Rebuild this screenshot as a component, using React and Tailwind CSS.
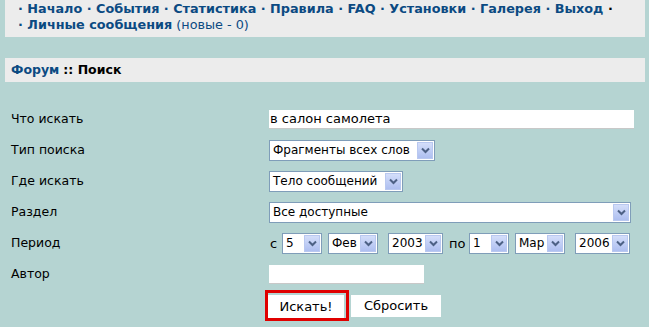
import React from "react";

const font = { fontFamily: "'DejaVu Sans', Verdana, sans-serif" };

function Arrow() {
  return (
    <span className="flex h-full w-[16px] items-center justify-center border border-[#b9c8f0] bg-gradient-to-b from-[#d4defa] to-[#aebff0]">
      <svg width="9" height="7" viewBox="0 0 9 7">
        <path d="M1 1.5 L4.5 5 L8 1.5" fill="none" stroke="#4d6185" strokeWidth="2" />
      </svg>
    </span>
  );
}

function Select({ value, className }) {
  return (
    <div className={`flex h-[21px] items-stretch border border-[#7f9db9] bg-white p-[1px] ${className}`}>
      <span className="flex-1 overflow-hidden whitespace-nowrap pl-[2px] text-[12px] leading-[17px] text-black">{value}</span>
      <Arrow />
    </div>
  );
}

const Row = ({ label, children }) => (
  <div className="flex h-[31px] items-center">
    <div className="w-[264px] pl-[6px] pb-[2px] text-[12.5px] leading-[16px] text-black">{label}</div>
    <div className="flex items-center">{children}</div>
  </div>
);

export default function App() {
  const links = ["Начало", "События", "Статистика", "Правила", "FAQ", "Установки", "Галерея", "Выход"];
  return (
    <div className="h-[327px] w-[649px] overflow-hidden bg-[#b5d4d2] pl-[5px] pr-[4px]" style={font}>
      <div className="h-[37px] bg-[#ececec] pl-[13px] pt-[1px] text-[12.8px] leading-[16px] text-[#0b4a82]">
        <div className="whitespace-nowrap font-bold">
          {links.map((l) => (
            <span key={l}>· {l} </span>
          ))}
          <span className="text-black">·</span>
        </div>
        <div>
          <span className="font-bold">· Личные сообщения</span> (новые - 0)
        </div>
      </div>
      <div className="h-[21px]" />
      <div className="flex h-[24px] items-center bg-[#ececec] pl-[6px] text-[12.5px] font-bold">
        <span className="text-[#0b4a82]">Форум</span>
        <span className="ml-[4px] text-black">:: Поиск</span>
      </div>
      <div className="h-[22px]" />
      <Row label="Что искать">
        <div className="h-[19px] w-[365px] border-b border-[#c8c8c8] bg-white pl-[1px] text-[13px] leading-[18px]">в салон самолета</div>
      </Row>
      <Row label="Тип поиска">
        <Select value="Фрагменты всех слов" className="w-[166px]" />
      </Row>
      <Row label="Где искать">
        <Select value="Тело сообщений" className="w-[134px]" />
      </Row>
      <Row label="Раздел">
        <Select value="Все доступные" className="w-[362px]" />
      </Row>
      <Row label="Период">
        <span className="w-[13px] pl-[1px] text-[13px]">с</span>
        <Select value="5" className="w-[40px]" />
        <Select value="Фев" className="ml-[6px] w-[50px]" />
        <Select value="2003" className="ml-[10px] w-[55px]" />
        <span className="w-[26px] pl-[6px] text-[13px]">по</span>
        <Select value="1" className="w-[40px]" />
        <Select value="Мар" className="ml-[6px] w-[50px]" />
        <Select value="2006" className="ml-[10px] w-[55px]" />
      </Row>
      <Row label="Автор">
        <div className="h-[19px] w-[155px] border-b border-[#c8c8c8] bg-white" />
      </Row>
      <div className="flex items-center pl-[260px]">
        <div className="h-[31px] w-[84px] border-[3px] border-[#e00000] pt-[1px]">
          <button className="h-[23px] w-[76px] bg-white text-[13px] text-black">Искать!</button>
        </div>
        <button className="ml-[2px] h-[22px] w-[90px] bg-white text-[13px] text-black">Сбросить</button>
      </div>
    </div>
  );
}
